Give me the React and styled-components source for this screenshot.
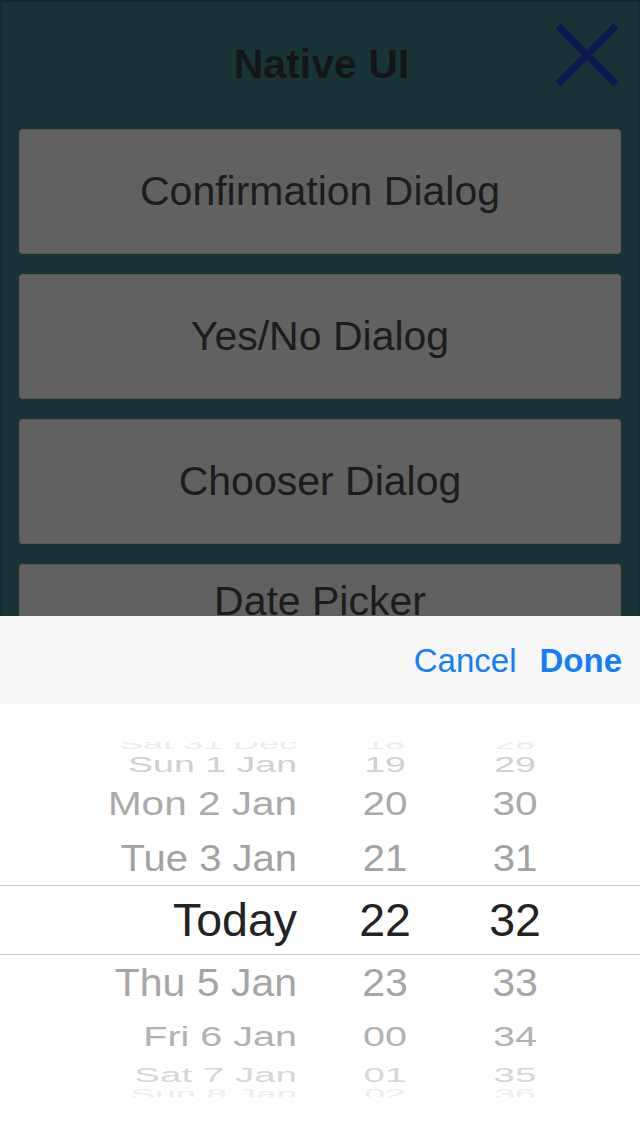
import React from "react";
import styled, { createGlobalStyle } from "styled-components";

const buttons = [
  { label: "Confirmation Dialog" },
  { label: "Yes/No Dialog" },
  { label: "Chooser Dialog" },
  { label: "Date Picker", short: true },
];

// wheel rows, top to bottom; size/scale/tone fake the 3d drum
const wheel = [
  { day: "Sat 31 Dec", hour: "18", min: "28", size: 36, squash: 0.42, tone: "#ececec", height: 14 },
  { day: "Sun 1 Jan", hour: "19", min: "29", size: 37.5, squash: 0.6, tone: "#d0d0d0", height: 28 },
  { day: "Mon 2 Jan", hour: "20", min: "30", size: 40.5, squash: 0.8, tone: "#aaaaaa", height: 51 },
  { day: "Tue 3 Jan", hour: "21", min: "31", size: 40, squash: 0.9, tone: "#a2a2a2", height: 55 },
  { day: "Today", hour: "22", min: "32", size: 46.5, squash: 1, tone: "#232323", height: 70, selected: true },
  { day: "Thu 5 Jan", hour: "23", min: "33", size: 41, squash: 0.94, tone: "#a6a6a6", height: 56 },
  { day: "Fri 6 Jan", hour: "00", min: "34", size: 39.5, squash: 0.72, tone: "#b2b2b2", height: 52 },
  { day: "Sat 7 Jan", hour: "01", min: "35", size: 38.5, squash: 0.54, tone: "#d6d6d6", height: 25 },
  { day: "Sun 8 Jan", hour: "02", min: "36", size: 37, squash: 0.4, tone: "#ededed", height: 12 },
];

function CloseIcon() {
  return (
    <svg width="64" height="64" viewBox="0 0 64 64">
      <path d="M3 3 L61 61 M61 3 L3 61" stroke="#0b1850" strokeWidth="7" fill="none" />
    </svg>
  );
}

function App() {
  return (
    <>
      <GlobalStyle />
      <Screen>
        <Content>
          <Header>
            <Title>Native UI</Title>
            <CloseButton>
              <CloseIcon />
            </CloseButton>
          </Header>
          <ButtonList>
            {buttons.map((b) => (
              <DialogButton key={b.label} $short={b.short}>
                {b.label}
              </DialogButton>
            ))}
          </ButtonList>
        </Content>

        <Sheet>
          <Toolbar>
            <ToolbarAction>Cancel</ToolbarAction>
            <ToolbarAction $primary>Done</ToolbarAction>
          </Toolbar>
          <WheelArea>
            <WheelWindow>
              <WheelRows>
                {wheel.map((r) => (
                  <WheelRow key={r.day} $height={r.height} $selected={r.selected}>
                    <DayCell $size={r.size} $squash={r.squash} $tone={r.tone}>
                      {r.day}
                    </DayCell>
                    <NumberCell $size={r.size} $squash={r.squash} $tone={r.tone}>
                      {r.hour}
                    </NumberCell>
                    <NumberCell $size={r.size} $squash={r.squash} $tone={r.tone}>
                      {r.min}
                    </NumberCell>
                  </WheelRow>
                ))}
              </WheelRows>
            </WheelWindow>
          </WheelArea>
        </Sheet>
      </Screen>
    </>
  );
}

export default App;

const GlobalStyle = createGlobalStyle`
  html, body {
    margin: 0;
    padding: 0;
    background: #193436;
  }
  body {
    font-family: "Liberation Sans", Arial, sans-serif;
  }
  * {
    box-sizing: border-box;
  }
`;

const Screen = styled.div`
  position: relative;
  width: 640px;
  height: 1136px;
  overflow: hidden;
  background: #193436;
`;

const Content = styled.div`
  height: 100%;
  border-top: 2px solid #16252e;
  border-left: 2px solid #172a32;
  border-right: 1px solid #172a32;
`;

const Header = styled.div`
  display: grid;
  grid-template-columns: 1fr auto 1fr;
  height: 127px;
  padding: 0 20px 0 22px;
`;

const Title = styled.h1`
  grid-column: 2;
  align-self: center;
  margin: 0 0 3px 0;
  font-size: 41px;
  line-height: 41px;
  font-weight: bold;
  color: #151515;
`;

const CloseButton = styled.div`
  grid-column: 3;
  justify-self: end;
  align-self: start;
  margin-top: 21px;
  width: 64px;
  height: 64px;
  display: flex;
`;

const ButtonList = styled.div`
  display: flex;
  flex-direction: column;
  gap: 20px;
  padding: 0 18px 0 17px;
`;

const DialogButton = styled.div`
  height: ${(p) => (p.$short ? "74px" : "125px")};
  display: flex;
  align-items: center;
  justify-content: center;
  background: #616161;
  border: 1px solid #575757;
  border-radius: 3px;
  font-size: 41px;
  color: #1c1c1c;
`;

const Sheet = styled.div`
  position: absolute;
  left: 0;
  right: 0;
  bottom: 0;
  height: 520px;
  display: flex;
  flex-direction: column;
  background: #ffffff;
`;

const Toolbar = styled.div`
  height: 88px;
  display: flex;
  align-items: center;
  justify-content: flex-end;
  gap: 23px;
  padding-right: 18px;
  background: #f7f7f7;
`;

const ToolbarAction = styled.span`
  font-size: 33px;
  line-height: 1;
  color: #147efb;
  font-weight: ${(p) => (p.$primary ? "bold" : "normal")};
`;

const WheelArea = styled.div`
  flex: 1;
  padding-top: 38px;
  background: #ffffff;
`;

const WheelWindow = styled.div`
  height: 355px;
  overflow: hidden;
`;

const WheelRows = styled.div`
  display: flex;
  flex-direction: column;
  margin-top: -5px;
`;

const WheelRow = styled.div`
  flex: none;
  height: ${(p) => p.$height}px;
  display: flex;
  align-items: center;
  gap: 46px;
  border-top: ${(p) => (p.$selected ? "1px solid #cdcdcd" : "none")};
  border-bottom: ${(p) => (p.$selected ? "1px solid #cdcdcd" : "none")};
`;

const DayCell = styled.span`
  flex: none;
  width: 297px;
  white-space: nowrap;
  text-align: right;
  font-size: ${(p) => p.$size}px;
  line-height: 1;
  color: ${(p) => p.$tone};
  transform: scaleY(${(p) => p.$squash});
`;

const NumberCell = styled(DayCell)`
  width: 84px;
  text-align: center;
`;
